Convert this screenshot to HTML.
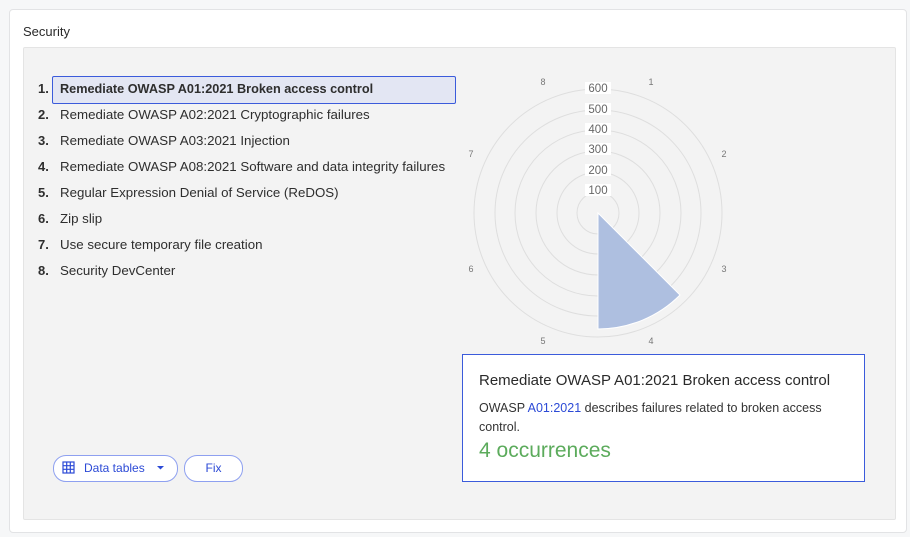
<!DOCTYPE html>
<html><head><style>
body{margin:0;width:910px;height:537px;background:#f6f7f8;font-family:"Liberation Sans",sans-serif;position:relative;overflow:hidden}
.card{position:absolute;left:9px;top:9px;width:896px;height:522px;background:#fff;border:1px solid #e2e3e5;border-radius:4px}
.title{position:absolute;left:23px;top:24px;font-size:13px;color:#2a2a2a}
.panel{position:absolute;left:23px;top:47px;width:871px;height:471px;background:#f3f3f3;border:1px solid #e4e4e4;border-radius:2px}
.item{position:absolute;left:38px;font-size:13.3px;color:#2e2e2e;height:26px;line-height:26px;white-space:nowrap}
.item b{display:inline-block;width:22px;font-size:13px;vertical-align:top}
.sel{position:absolute;left:52px;top:76px;width:402px;height:26px;border:1px solid #3b5bdb;background:#e3e6f3;border-radius:2px}
.info{position:absolute;left:462px;top:354px;width:401px;height:126px;background:#fff;border:1px solid #3b5bdb}
.btn{position:absolute;top:455px;height:25px;border:1px solid #8ea0f0;border-radius:13px;background:#fff;color:#2c4ad6;font-size:12px;line-height:25px}
</style></head><body>
<div class="card"></div>
<div class="title">Security</div>
<div class="panel"></div>
<div class="sel"></div>
<div class="item" style="top:76px;font-size:12.7px;font-weight:bold"><b>1.</b>Remediate OWASP A01:2021 Broken access control</div>
<div class="item" style="top:102px"><b>2.</b>Remediate OWASP A02:2021 Cryptographic failures</div>
<div class="item" style="top:128px"><b>3.</b>Remediate OWASP A03:2021 Injection</div>
<div class="item" style="top:154px"><b>4.</b>Remediate OWASP A08:2021 Software and data integrity failures</div>
<div class="item" style="top:180px"><b>5.</b>Regular Expression Denial of Service (ReDOS)</div>
<div class="item" style="top:206px"><b>6.</b>Zip slip</div>
<div class="item" style="top:232px"><b>7.</b>Use secure temporary file creation</div>
<div class="item" style="top:258px"><b>8.</b>Security DevCenter</div>
<div class="btn" style="left:53px;width:123px"><span style="margin-left:30px">Data tables</span></div>
<div class="btn" style="left:184px;width:57px;text-align:center">Fix</div>
<svg style="position:absolute;left:0;top:0" width="910" height="537">
<g fill="none" stroke="#dedede" stroke-width="1">
<circle cx="598" cy="213" r="21"/><circle cx="598" cy="213" r="41"/><circle cx="598" cy="213" r="62"/><circle cx="598" cy="213" r="83"/><circle cx="598" cy="213" r="103"/><circle cx="598" cy="213" r="124"/></g>
<path d="M598 213 L680 295 A116 116 0 0 1 598 329 Z" fill="#aebfe0" stroke="#fff" stroke-width="1"/>
<g font-size="11.5" fill="#666" text-anchor="middle" font-family="Liberation Sans">
<rect x="585" y="82" width="26" height="12" fill="#fff"/><text x="598" y="92">600</text>
<rect x="585" y="103" width="26" height="12" fill="#fff"/><text x="598" y="113">500</text>
<rect x="585" y="123" width="26" height="12" fill="#fff"/><text x="598" y="133">400</text>
<rect x="585" y="143" width="26" height="12" fill="#fff"/><text x="598" y="153">300</text>
<rect x="585" y="164" width="26" height="12" fill="#fff"/><text x="598" y="174">200</text>
<rect x="585" y="184" width="26" height="12" fill="#fff"/><text x="598" y="194">100</text>
</g>
<g font-size="9" fill="#777" text-anchor="middle" font-family="Liberation Sans">
<text x="651" y="85">1</text><text x="724" y="157">2</text><text x="724" y="272">3</text><text x="651" y="344">4</text>
<text x="543" y="344">5</text><text x="471" y="272">6</text><text x="471" y="157">7</text><text x="543" y="85">8</text></g>
<g stroke="#2c4ad6" fill="none" stroke-width="1.2"><rect x="63" y="462" width="11" height="11"/><path d="M66.7 462v11M70.3 462v11M63 465.7h11M63 469.3h11"/></g>
<path d="M157 466h7l-3.5 3.5z" fill="#2c4ad6"/>
</svg>
<div class="info">
<div style="position:absolute;left:16px;top:17px;font-size:15px;color:#2a2a2a">Remediate OWASP A01:2021 Broken access control</div>
<div style="position:absolute;left:16px;top:44px;width:380px;font-size:12.5px;line-height:19px;color:#333">OWASP <span style="color:#2c4ad6">A01:2021</span> describes failures related to broken access control.</div>
<div style="position:absolute;left:16px;top:84px;font-size:21px;color:#5cab5c">4 occurrences</div>
</div>
</body></html>
